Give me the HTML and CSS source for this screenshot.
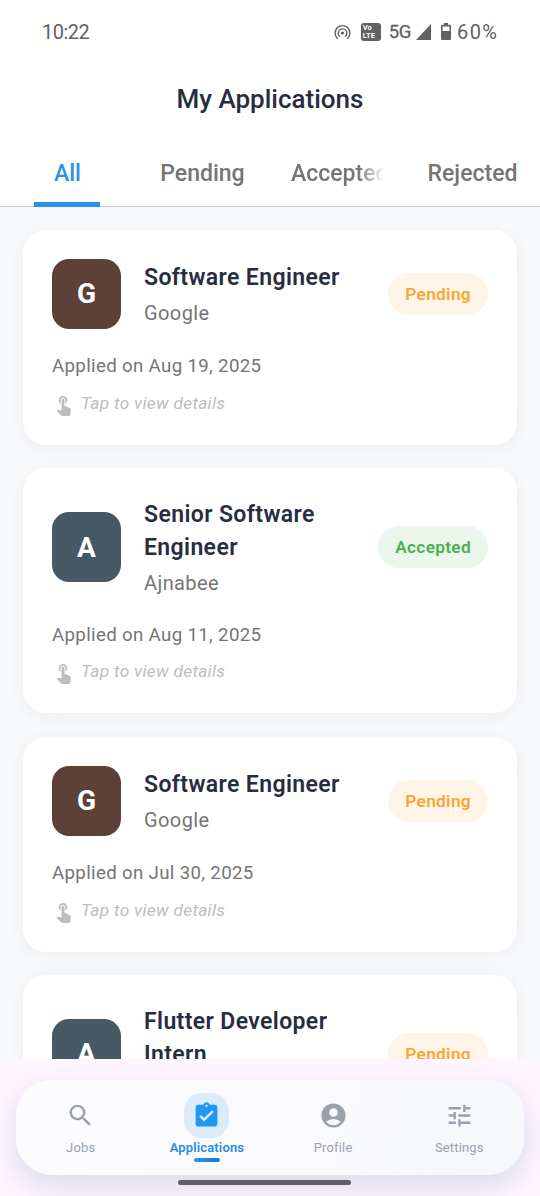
FILE: index.html
```html
<!DOCTYPE html>
<html lang="en">
<head>
<meta charset="utf-8">
<title>My Applications</title>
<link rel="stylesheet" href="styles.css">
</head>
<body>
<svg class="defs" width="0" height="0">
  <symbol id="tap" viewBox="0 0 24 24"><path d="M9 11.24V7.5C9 6.12 10.12 5 11.5 5S14 6.12 14 7.5v3.74c1.21-.81 2-2.18 2-3.74C16 5.01 13.99 3 11.5 3S7 5.01 7 7.5c0 1.56.79 2.93 2 3.74zm9.84 4.63l-4.54-2.26c-.17-.07-.35-.11-.54-.11H13v-6c0-.83-.67-1.5-1.5-1.5S10 6.67 10 7.5v10.74l-3.43-.72c-.08-.01-.15-.03-.24-.03-.31 0-.59.13-.79.33l-.79.8 4.94 4.94c.27.27.65.44 1.06.44h6.79c.75 0 1.33-.55 1.44-1.28l.75-5.27c.01-.07.02-.14.02-.2 0-.62-.38-1.16-.91-1.38z"/></symbol>
</svg>
<div class="phone">
  <header class="status">
    <span class="clock">10:22</span>
    <div class="indicators">
      <svg class="hotspot" viewBox="0 0 17 16"><circle cx="8.5" cy="9" r="1.6"/><path class="wave" d="M3.3 14.3a7.4 7.4 0 1 1 10.4 0M5.6 12.3a4.3 4.3 0 1 1 5.8 0"/></svg>
      <span class="volte"><span>Vo</span><span>LTE</span></span>
      <span class="net">5G</span>
      <svg class="signal" viewBox="0 0 15 16"><path d="M15 0v16H0z"/></svg>
      <svg class="battery" viewBox="0 0 10 17"><path fill-rule="evenodd" d="M3 0h4v1.7h2Q10 1.7 10 2.7V16Q10 17 9 17H1Q0 17 0 16V2.7Q0 1.7 1 1.7H3zM1.5 3.5V8h7V3.5z"/></svg>
      <span class="pct">60%</span>
    </div>
  </header>
  <h1 class="title">My Applications</h1>
  <nav class="tabs">
    <span class="tab active"><span class="tab-label">All</span></span>
    <span class="tab"><span class="tab-label">Pending</span></span>
    <span class="tab"><span class="tab-label fade">Accepted</span></span>
    <span class="tab"><span class="tab-label">Rejected</span></span>
  </nav>
  <main class="list">
    <article class="card">
      <div class="top"><span class="tile brown">G</span><div class="info"><h2 class="job">Software Engineer</h2><p class="company">Google</p></div><span class="badge pending">Pending</span></div>
      <p class="date">Applied on Aug 19, 2025</p>
      <p class="hint"><svg class="tap"><use href="#tap"/></svg><span>Tap to view details</span></p>
    </article>
    <article class="card">
      <div class="top"><span class="tile slate">A</span><div class="info"><h2 class="job">Senior Software Engineer</h2><p class="company">Ajnabee</p></div><span class="badge accepted">Accepted</span></div>
      <p class="date">Applied on Aug 11, 2025</p>
      <p class="hint"><svg class="tap"><use href="#tap"/></svg><span>Tap to view details</span></p>
    </article>
    <article class="card">
      <div class="top"><span class="tile brown">G</span><div class="info"><h2 class="job">Software Engineer</h2><p class="company">Google</p></div><span class="badge pending">Pending</span></div>
      <p class="date">Applied on Jul 30, 2025</p>
      <p class="hint"><svg class="tap"><use href="#tap"/></svg><span>Tap to view details</span></p>
    </article>
    <article class="card">
      <div class="top"><span class="tile slate">A</span><div class="info"><h2 class="job">Flutter Developer Intern</h2><p class="company">Ajnabee</p></div><span class="badge pending">Pending</span></div>
    </article>
  </main>
  <footer class="dock">
    <nav class="bar">
      <a class="item"><span class="icon"><svg viewBox="0 0 24 24"><path d="M15.5 14h-.79l-.28-.27A6.47 6.47 0 0 0 16 9.5 6.5 6.5 0 1 0 9.5 16c1.61 0 3.09-.59 4.23-1.57l.27.28v.79l5 4.99L20.49 19l-4.99-5zm-6 0C7.01 14 5 11.99 5 9.5S7.01 5 9.5 5 14 7.01 14 9.5 11.99 14 9.5 14z"/></svg></span><span class="label">Jobs</span></a>
      <a class="item active"><span class="icon"><svg viewBox="0 0 24 24"><path d="M19 3h-4.18C14.4 1.84 13.3 1 12 1s-2.4.84-2.82 2H5c-1.1 0-2 .9-2 2v14c0 1.1.9 2 2 2h14c1.1 0 2-.9 2-2V5c0-1.1-.9-2-2-2zm-7 0c.55 0 1 .45 1 1s-.45 1-1 1-1-.45-1-1 .45-1 1-1zm-2 14l-4-4 1.41-1.41L10 14.17l6.59-6.59L18 9l-8 8z"/></svg></span><span class="label">Applications</span><span class="mark"></span></a>
      <a class="item"><span class="icon"><svg viewBox="0 0 24 24"><path d="M12 2C6.48 2 2 6.48 2 12s4.48 10 10 10 10-4.48 10-10S17.52 2 12 2zm0 4c1.93 0 3.5 1.57 3.5 3.5S13.93 13 12 13s-3.5-1.57-3.5-3.5S10.07 6 12 6zm0 14c-2.03 0-4.43-.82-6.14-2.88a9.95 9.95 0 0 1 12.28 0C16.43 19.18 14.03 20 12 20z"/></svg></span><span class="label">Profile</span></a>
      <a class="item"><span class="icon"><svg viewBox="0 0 24 24"><path d="M3 17v2h6v-2H3zM3 5v2h10V5H3zm10 16v-2h8v-2h-8v-2h-2v6h2zM7 9v2H3v2h4v2h2V9H7zm14 4v-2H11v2h10zm-6-4h2V7h4V5h-4V3h-2v6z"/></svg></span><span class="label">Settings</span></a>
    </nav>
    <div class="home"></div>
  </footer>
</div>
</body>
</html>
```
FILE: styles.css
```css
* { box-sizing: border-box; margin: 0; padding: 0; }
body { font-family: Roboto, "Noto Sans", sans-serif; background: #fff; }
.defs { position: absolute; }
.phone { width: 540px; height: 1196px; display: flex; flex-direction: column; overflow: hidden; background: #f8f9fb; }

.status { height: 62px; flex: none; display: flex; justify-content: space-between; align-items: center; padding: 1px 43px 0 42px; background: #fff; color: #616161; font-size: 20px; }
.clock { letter-spacing: -.5px; }
.indicators { display: flex; align-items: center; }
.indicators svg { fill: #616161; }
.hotspot { width: 17px; height: 16px; margin-right: 10px; }
.indicators .wave { fill: none; stroke: #616161; stroke-width: 1.4; stroke-linecap: round; }
.volte { width: 20px; height: 18px; border-radius: 3px; background: #616161; color: #fff; display: flex; flex-direction: column; justify-content: center; padding-left: 2px; font-size: 7.5px; line-height: 7.5px; font-weight: 700; margin-right: 8px; }
.net { font-size: 18.5px; letter-spacing: -.4px; margin-right: 5px; font-weight: 400; -webkit-text-stroke: .3px #616161; }
.signal { width: 15px; height: 16px; margin-right: 10px; }
.battery { width: 10px; height: 17px; margin-right: 6px; }
.pct { font-size: 20px; letter-spacing: 1.4px; margin-right: -1.4px; padding-top: 1px; }

.title { height: 77px; flex: none; background: #fff; text-align: center; font-size: 26px; line-height: 75px; font-weight: 500; color: #272d40; letter-spacing: 0; }

.tabs { height: 68px; flex: none; display: grid; grid-template-columns: repeat(4, 135px); background: #fff; border-bottom: 1px solid #cac4d0; }
.tab { position: relative; padding: 0 22px; text-align: center; color: #757575; font-size: 23px; line-height: 70px; height: 67px; font-weight: 500; }
.tab-label { display: block; white-space: nowrap; letter-spacing: 0; }
.tab.active { color: #2c92e8; }
.tab.active::after { content: ""; position: absolute; left: 34px; right: 35px; bottom: -1px; height: 5px; background: #2c92e8; }
.fade { margin-left: -1px; overflow: hidden; text-align: left; -webkit-mask-image: linear-gradient(90deg, #000 73%, transparent 101%); mask-image: linear-gradient(90deg, #000 73%, transparent 101%); }

.list { flex: 1; min-height: 0; overflow: hidden; padding: 22.8px 23px 0; display: flex; flex-direction: column; gap: 23.4px; }
.card { flex: none; background: #fff; border-radius: 23px; padding: 29px; box-shadow: 0 3px 17px rgba(30, 40, 60, .05); }
.top { display: flex; align-items: center; min-height: 70px; }
.tile { width: 69px; height: 70px; border-radius: 17px; flex: none; display: flex; align-items: center; justify-content: center; color: #fff; font-size: 28px; font-weight: 700; }
.brown { background: #5d4037; }
.slate { background: #455a64; }
.info { flex: 1; padding: 0 17px 0 23px; }
.job { padding-top: 1px; margin-bottom: -1px; font-size: 23px; line-height: 33px; font-weight: 600; color: #272d40; letter-spacing: .38px; }
.company { margin-top: 6px; margin-bottom: -1px; font-size: 20px; line-height: 29px; color: #757575; letter-spacing: .4px; }
.badge { flex: none; height: 42px; border-radius: 21px; padding: 0 17px; font-size: 17.3px; line-height: 42px; font-weight: 600; letter-spacing: .3px; }
.pending { background: #fff4e8; color: #f5a833; }
.accepted { background: #ebf6ec; color: #4caf50; }
.date { margin-top: 24.5px; font-size: 18.7px; line-height: 27px; color: #757575; letter-spacing: .33px; }
.hint { display: flex; gap: 6px; margin-top: 10.5px; height: 25px; align-items: flex-end; font-size: 17.3px; line-height: 25px; font-style: italic; color: #bdbdbd; letter-spacing: .3px; }
.tap { width: 23px; height: 23px; fill: #bdbdbd; }

.dock { height: 137px; flex: none; padding: 21px 16px 0; overflow: hidden; background: #fef6ff; display: flex; flex-direction: column; align-items: center; }
.bar { align-self: stretch; height: 95px; flex: none; border-radius: 36px; display: grid; grid-template-columns: repeat(4, 126.2px); justify-content: center; background: linear-gradient(110deg, #fcfcfe, #f7f8fc); box-shadow: 0 11px 30px rgba(60, 90, 150, .19); }
.item { display: flex; flex-direction: column; align-items: center; padding-top: 13px; color: #9aa1ad; }
.icon { width: 45px; height: 45px; border-radius: 18px; display: flex; align-items: center; justify-content: center; }
.icon svg { width: 29px; height: 29px; fill: currentColor; }
.label { font-size: 13px; line-height: 18px; margin-top: 1px; letter-spacing: .15px; }
.item.active { color: #2196f3; }
.active .icon { background: #dcebfa; }
.active .label { font-weight: 600; color: #2b8cd9; }
.mark { width: 26px; height: 4px; border-radius: 2px; margin-top: 1px; background: linear-gradient(90deg, #2196f3, #1976d2); }
.home { width: 173px; height: 5px; margin: 5px 12px 0 0; border-radius: 3px; background: #5f5d67; flex: none; position: relative; }
```
